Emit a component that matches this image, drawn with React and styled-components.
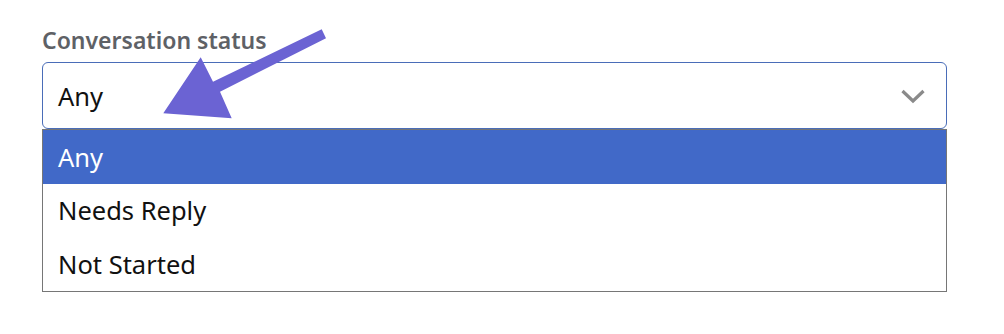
import React from 'react';
import styled, { createGlobalStyle } from 'styled-components';

const GlobalStyle = createGlobalStyle`
  * { box-sizing: border-box; }
  body {
    margin: 0;
    background: #ffffff;
    font-family: "Noto Sans", "Open Sans", sans-serif;
  }
`;

const Page = styled.div`
  position: relative;
  width: 1004px;
  height: 334px;
  padding: 25px 57px 0 42px;
`;

const Label = styled.div`
  font-size: 23px;
  font-weight: 600;
  color: #5e6166;
  line-height: 31px;
  margin-bottom: 6px;
`;

const SelectBox = styled.div`
  display: flex;
  align-items: center;
  justify-content: space-between;
  height: 67px;
  padding: 0 20px 0 15px;
  border: 1px solid #4a6db8;
  border-radius: 6px;
  font-size: 25.5px;
  color: #111;
`;

const Chevron = styled.svg`
  width: 26px;
  height: 16px;
`;

const Menu = styled.ul`
  list-style: none;
  margin: 0;
  padding: 0;
  border: 1px solid #767676;
  width: 905px;
`;

const Option = styled.li`
  height: 53.5px;
  display: flex;
  align-items: center;
  padding-left: 15px;
  font-size: 25.5px;
  color: ${(p) => (p.$active ? '#ffffff' : '#111111')};
  background: ${(p) => (p.$active ? '#4169c8' : '#ffffff')};
`;

const Arrow = styled.svg`
  position: absolute;
  left: 0;
  top: 0;
  pointer-events: none;
`;

const options = ['Any', 'Needs Reply', 'Not Started'];

export default function App() {
  return (
    <Page>
      <GlobalStyle />
      <Label>Conversation status</Label>
      <SelectBox>
        <span>Any</span>
        <Chevron viewBox="0 0 26 16">
          <path d="M2.5 3 L13 13 L23.5 3" fill="none" stroke="#8a8a8a" strokeWidth="3.2" />
        </Chevron>
      </SelectBox>
      <Menu>
        {options.map((o, i) => (
          <Option key={o} $active={i === 0}>{o}</Option>
        ))}
      </Menu>
      <Arrow width="1004" height="334" viewBox="0 0 1004 334">
        <polygon
          points="321.7,29.3 213,81.7 200.7,57.3 163.3,113.3 231.7,118.3 220,91.7 326,38.3"
          fill="#6b63d3"
        />
      </Arrow>
    </Page>
  );
}
